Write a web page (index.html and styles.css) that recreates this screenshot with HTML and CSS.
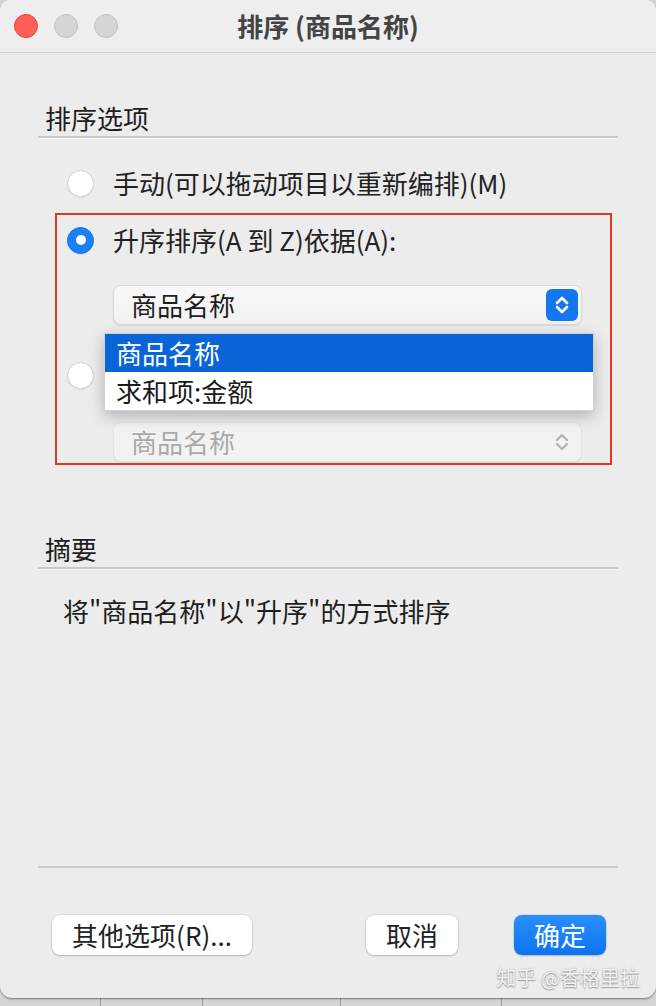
FILE: index.html
```html
<!DOCTYPE html>
<html lang="zh-CN">
<head>
<meta charset="utf-8">
<title>排序 (商品名称)</title>
<link rel="stylesheet" href="styles.css">
</head>
<body>
<div class="screen">
  <div class="window">
    <div class="titlebar">
      <div class="lights">
        <span class="light red"></span>
        <span class="light"></span>
        <span class="light"></span>
      </div>
      <div class="title">排序 (商品名称)</div>
      <div></div>
    </div>
    <div class="content">
      <div class="section-head">排序选项</div>
      <div class="options">
        <div class="radio-row manual">
          <span class="radio"></span>
          <span class="label">手动(可以拖动项目以重新编排)(M)</span>
        </div>
        <div class="highlight-box">
          <div class="radio-row">
            <span class="radio on"></span>
            <span class="label">升序排序(A 到 Z)依据(A):</span>
          </div>
          <div class="popup">
            <span class="popup-text">商品名称</span>
            <span class="stepper">
              <svg width="32" height="32" viewBox="0 0 32 32"><path d="M11 14 L16 9 L21 14 M11 18 L16 23 L21 18" fill="none" stroke="#fff" stroke-width="2.6" stroke-linecap="round" stroke-linejoin="round"/></svg>
            </span>
          </div>
          <div class="radio-row">
            <span class="radio"></span>
          </div>
          <div class="popup disabled">
            <span class="popup-text">商品名称</span>
            <span class="stepper plain">
              <svg width="32" height="32" viewBox="0 0 32 32"><path d="M11 14 L16 9 L21 14 M11 18 L16 23 L21 18" fill="none" stroke="#b4b4b4" stroke-width="2.4" stroke-linecap="round" stroke-linejoin="round"/></svg>
            </span>
          </div>
          <div class="menu">
            <div class="menu-item selected">商品名称</div>
            <div class="menu-item">求和项:金额</div>
          </div>
        </div>
      </div>
      <div class="section-head summary-head">摘要</div>
      <p class="summary">将"商品名称"以"升序"的方式排序</p>
      <div class="footer">
        <div class="buttons">
          <button class="btn more">其他选项(R)...</button>
          <button class="btn cancel">取消</button>
          <button class="btn ok">确定</button>
        </div>
      </div>
    </div>
    <div class="watermark">知乎 @香格里拉</div>
  </div>
  <div class="sheet">
    <span class="cell c1"></span>
    <span class="cell c2"></span>
    <span class="cell c3"></span>
    <span class="cell c4"></span>
    <span class="cell c5"></span>
  </div>
</div>
</body>
</html>
```

FILE: styles.css
```css
* { box-sizing: border-box; }

html, body {
  margin: 0;
  padding: 0;
}

body {
  background: #d6d6d6;
  font-family: "Noto Sans CJK SC", "Noto Sans", sans-serif;
  color: #222;
}

.screen {
  width: 656px;
  height: 1006px;
  display: flex;
  flex-direction: column;
  overflow: hidden;
}

.window {
  position: relative;
  width: 656px;
  height: 998px;
  flex: none;
  background: #ececec;
  border-radius: 10px 10px 12px 12px;
  box-shadow: 0 1px 2px rgba(0, 0, 0, 0.45);
  display: flex;
  flex-direction: column;
}

.titlebar {
  height: 53px;
  flex: none;
  display: grid;
  grid-template-columns: 1fr auto 1fr;
  align-items: center;
  border-bottom: 1px solid #cfcfcf;
  background: #eeeeee;
  border-radius: 10px 10px 0 0;
}

.lights {
  display: flex;
  gap: 16px;
  padding-left: 14px;
}

.light {
  width: 24px;
  height: 24px;
  border-radius: 50%;
  background: #d5d5d5;
  border: 1px solid #c2c2c2;
}

.light.red {
  background: #fe5f57;
  border-color: #e0443e;
}

.title {
  font-size: 26px;
  font-weight: 700;
  color: #444;
  line-height: 36px;
}

.content {
  flex: 1;
  display: flex;
  flex-direction: column;
  padding: 0 38px;
}

.section-head {
  margin-top: 47px;
  padding-left: 7px;
  font-size: 26px;
  line-height: 36px;
  color: #1e1e1e;
  border-bottom: 2px solid #c8c8c8;
  box-shadow: 0 1px 0 #fafafa;
}

.options {
  padding: 0 6px 0 17px;
}

.radio-row {
  height: 40px;
  display: flex;
  align-items: center;
  padding-left: 10px;
}

.radio-row.manual {
  margin-top: 25px;
  padding-left: 12px;
}

.radio {
  width: 27px;
  height: 27px;
  flex: none;
  border-radius: 50%;
  background: #fff;
  border: 1px solid #d0d0d0;
  box-shadow: 0 1px 1px rgba(0, 0, 0, 0.06);
  display: flex;
  align-items: center;
  justify-content: center;
}

.radio.on {
  background: #1a80f6;
  border-color: #1477ee;
}

.radio.on::after {
  content: "";
  width: 10px;
  height: 10px;
  border-radius: 50%;
  background: #fff;
}

.label {
  margin-left: 19px;
  font-size: 26px;
  line-height: 36px;
  color: #222;
}

.highlight-box {
  position: relative;
  margin-top: 10px;
  border: 2px solid #dc3a22;
  padding: 5px 0 1px 0;
}

.popup {
  height: 40px;
  margin: 25px 28px 0 56px;
  border-radius: 8px;
  background: linear-gradient(#f8f8f8, #f1f1f1);
  border: 1px solid #dadada;
  box-shadow: 0 1px 2px rgba(0, 0, 0, 0.1);
  display: flex;
  align-items: center;
  justify-content: space-between;
  padding: 0 3px 0 17px;
}

.popup-text {
  font-size: 26px;
  line-height: 36px;
  color: #1e1e1e;
}

.stepper {
  width: 32px;
  height: 32px;
  border-radius: 6px;
  background: #1676ef;
  display: flex;
}

.stepper.plain {
  background: transparent;
}

.radio-row + .popup.disabled {
  margin-top: 27px;
}

.highlight-box > .radio-row:nth-child(3) {
  margin-top: 30px;
}

.popup.disabled {
  background: #f2f2f2;
  border-color: #e4e4e4;
  box-shadow: 0 1px 1px rgba(0, 0, 0, 0.05);
}

.popup.disabled .popup-text {
  color: #a9a9a9;
}

.menu {
  position: absolute;
  left: 47px;
  top: 118px;
  width: 490px;
  background: #fff;
  border: 1px solid #d0d0d0;
  box-shadow: 0 5px 14px rgba(0, 0, 0, 0.25);
}

.menu-item {
  height: 38px;
  padding-left: 11px;
  font-size: 26px;
  line-height: 38px;
  color: #1a1a1a;
}

.menu-item.selected {
  background: #0a64d8;
  color: #fff;
}

.summary-head {
  margin-top: 66px;
}

.summary {
  margin: 24px 0 0 0;
  padding-left: 25px;
  font-size: 26px;
  line-height: 36px;
  color: #1e1e1e;
}

.footer {
  margin-top: auto;
  border-top: 2px solid #cbcbcb;
  padding: 47px 0 43px 0;
}

.buttons {
  display: flex;
  padding: 0 12px 0 14px;
}

.btn {
  height: 40px;
  border: none;
  border-radius: 8px;
  background: #fff;
  box-shadow: 0 0 0 0.5px rgba(0, 0, 0, 0.12), 0 1px 2px rgba(0, 0, 0, 0.2);
  font-family: inherit;
  font-size: 26px;
  line-height: 36px;
  color: #222;
  padding: 0;
}

.btn.more {
  width: 200px;
}

.btn.cancel {
  width: 92px;
  margin-left: auto;
}

.btn.ok {
  width: 92px;
  margin-left: 56px;
  background: linear-gradient(#2a8ffd, #0b74f1);
  color: #fff;
}

.watermark {
  position: absolute;
  right: 16px;
  bottom: 10px;
  font-size: 20px;
  line-height: 20px;
  color: rgba(255, 255, 255, 0.9);
  text-shadow: 0 0 2px rgba(0, 0, 0, 0.35), 0 1px 1px rgba(0, 0, 0, 0.25);
}

.sheet {
  flex: 1;
  display: flex;
  background: #d4d4d4;
}

.cell {
  height: 100%;
  border-right: 1px solid #9c9c9c;
}

.c1 { width: 101px; }
.c2 { width: 102px; }
.c3 { width: 138px; }
.c4 { width: 161px; }
.c5 { flex: 1; border-right: none; }
```
